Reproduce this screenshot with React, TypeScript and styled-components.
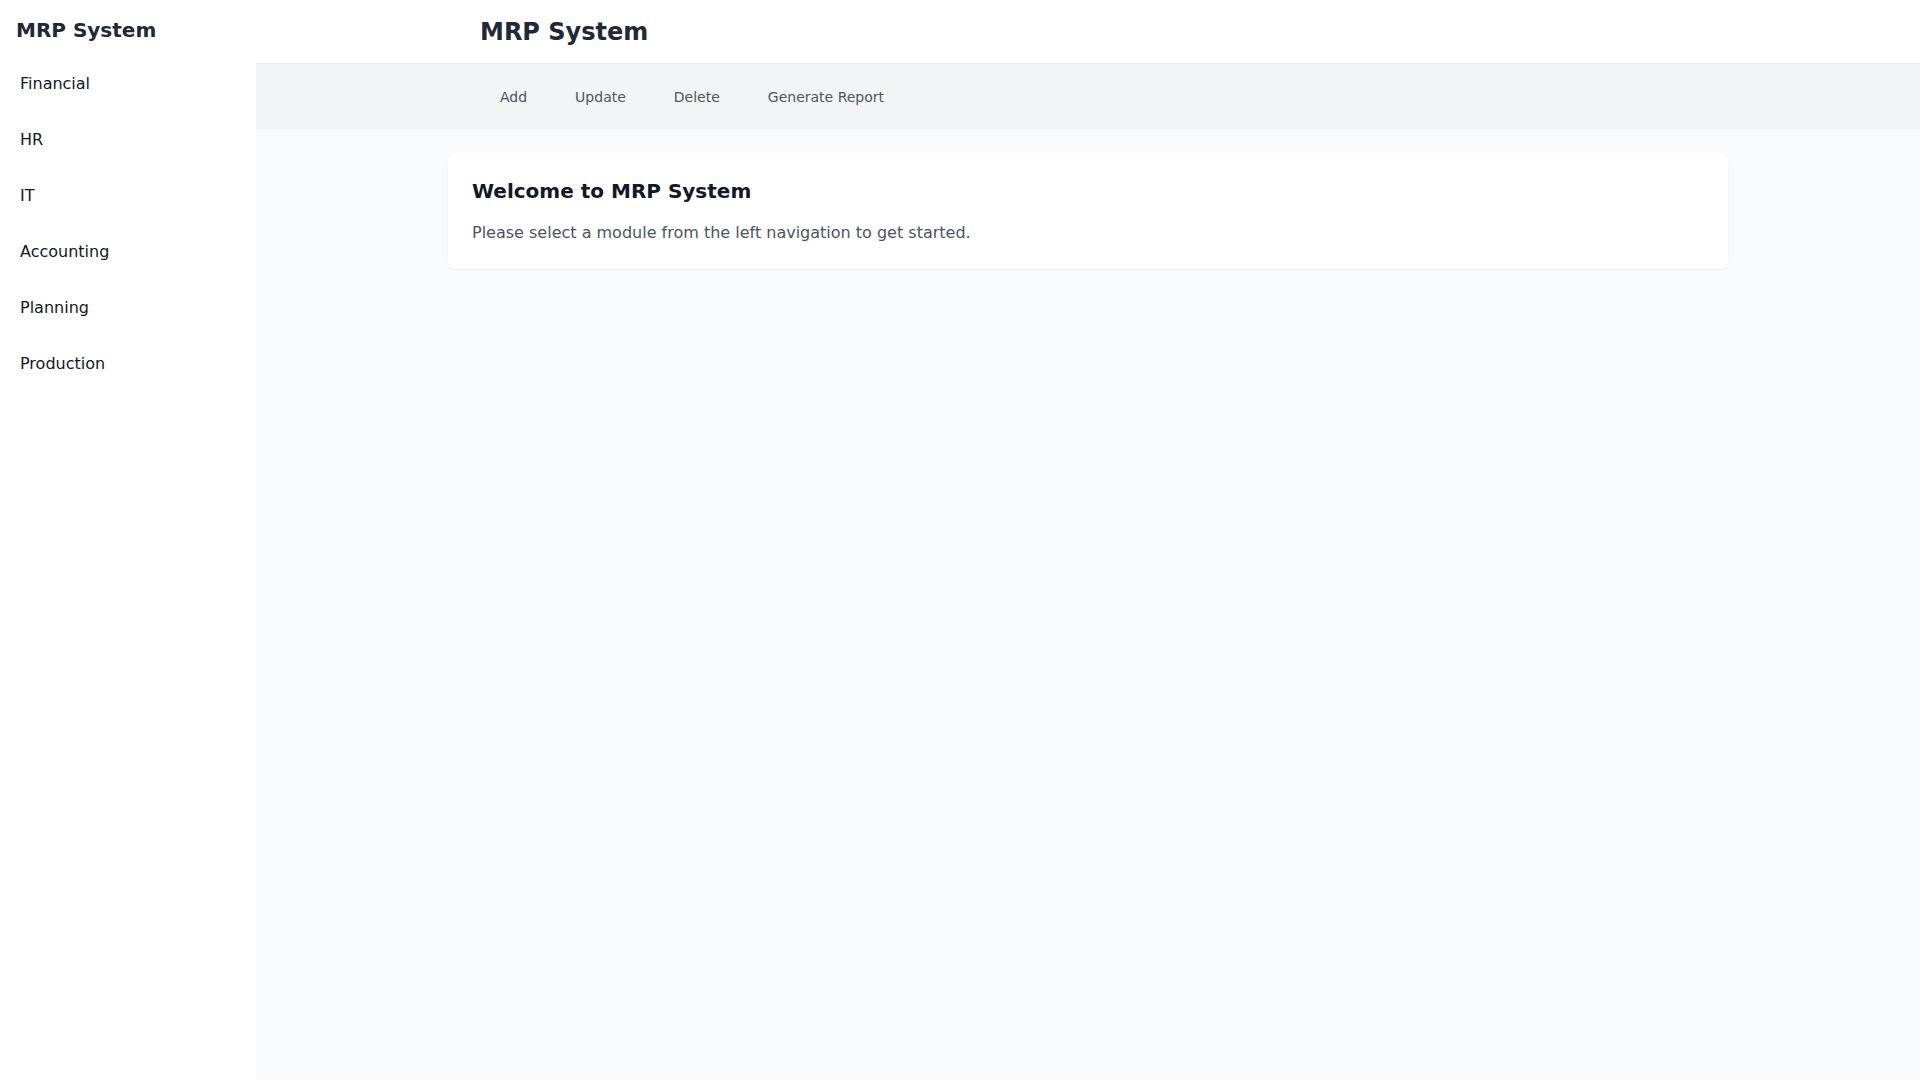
import React from "react";
import styled, { createGlobalStyle } from "styled-components";

const GlobalStyle = createGlobalStyle`
  *, *::before, *::after { box-sizing: border-box; }
  html, body { margin: 0; padding: 0; }
  body {
    font-family: "DejaVu Sans", "Liberation Sans", sans-serif;
    background: #f9fafb;
    color: #111827;
  }
  #root { min-height: 100vh; }
`;

const Layout = styled.div`
  display: flex;
  min-height: 100vh;
`;

const Sidebar = styled.aside`
  width: 256px;
  flex-shrink: 0;
  background: #ffffff;
  padding: 16px;
`;

const SidebarTitle = styled.h2`
  margin: 0 0 12px;
  font-size: 20px;
  line-height: 28px;
  font-weight: 700;
  color: #1f2937;
`;

const NavList = styled.nav`
  display: flex;
  flex-direction: column;
`;

const NavItem = styled.a`
  display: block;
  padding: 16px 4px;
  font-size: 16px;
  line-height: 24px;
  color: #111827;
  text-decoration: none;
  cursor: pointer;
`;

const Main = styled.div`
  flex: 1;
  display: flex;
  flex-direction: column;
  background: #f9fafb;
`;

const Header = styled.header`
  background: #ffffff;
  border-bottom: 1px solid #e5e7eb;
  height: 64px;
  display: flex;
  align-items: center;
`;

const Container = styled.div`
  width: 100%;
  max-width: 1280px;
  margin: 0 auto;
  padding: 0 ${(p: { $pad?: number }) => (p.$pad ?? 32)}px;
`;

const HeaderTitle = styled.h1`
  margin: 0;
  font-size: 24px;
  line-height: 32px;
  font-weight: 700;
  color: #1f2937;
`;

const Toolbar = styled.div`
  background: #f3f4f6;
  height: 65px;
  display: flex;
  align-items: center;
`;

const ButtonRow = styled.div`
  display: flex;
  align-items: center;
  gap: 8px;
`;

const ToolButton = styled.button`
  background: transparent;
  border: none;
  padding: 8px 20px;
  font-family: inherit;
  font-size: 14px;
  line-height: 20px;
  color: #4b5563;
  cursor: pointer;
  border-radius: 4px;
`;

const Content = styled.main`
  padding: 24px 0;
`;

const Card = styled.section`
  background: #ffffff;
  border-radius: 8px;
  box-shadow: 0 1px 2px rgba(0, 0, 0, 0.05);
  padding: 24px;
`;

const CardTitle = styled.h3`
  margin: 0 0 16px;
  font-size: 20px;
  line-height: 28px;
  font-weight: 700;
  color: #111827;
`;

const CardText = styled.p`
  margin: 0;
  font-size: 16px;
  line-height: 24px;
  color: #4b5563;
`;

const modules = ["Financial", "HR", "IT", "Accounting", "Planning", "Production"];
const actions = ["Add", "Update", "Delete", "Generate Report"];

export default function App() {
  return (
    <>
      <GlobalStyle />
      <Layout>
        <Sidebar>
          <SidebarTitle>MRP System</SidebarTitle>
          <NavList>
            {modules.map((m) => (
              <NavItem key={m}>{m}</NavItem>
            ))}
          </NavList>
        </Sidebar>
        <Main>
          <Header>
            <Container>
              <HeaderTitle>MRP System</HeaderTitle>
            </Container>
          </Header>
          <Toolbar>
            <Container>
              <ButtonRow>
                {actions.map((a) => (
                  <ToolButton key={a}>{a}</ToolButton>
                ))}
              </ButtonRow>
            </Container>
          </Toolbar>
          <Content>
            <Container $pad={0}>
              <Card>
                <CardTitle>Welcome to MRP System</CardTitle>
                <CardText>Please select a module from the left navigation to get started.</CardText>
              </Card>
            </Container>
          </Content>
        </Main>
      </Layout>
    </>
  );
}
